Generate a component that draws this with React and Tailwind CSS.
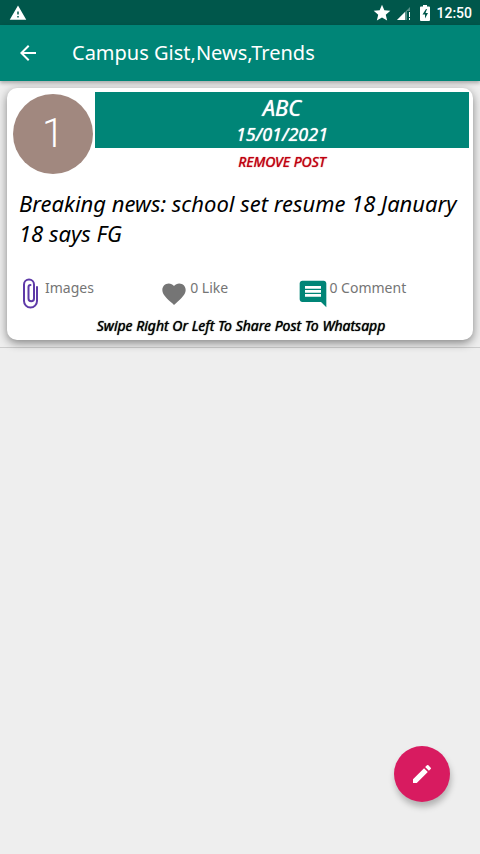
import {
  MdArrowBack,
  MdComment,
  MdEdit,
  MdFavorite,
  MdStar,
  MdWarning,
} from "react-icons/md";

const posts = [
  {
    id: 1,
    author: "ABC",
    date: "15/01/2021",
    text: "Breaking news: school set resume 18 January 18 says FG",
    likes: 0,
    comments: 0,
  },
];

function SignalIcon() {
  return (
    <svg viewBox="0 0 16 16" className="w-4 h-4" aria-hidden="true">
      <path d="M1 15 L14 2 V6 H11 V15 Z" fill="#fff" opacity="0.35" />
      <path d="M1 15 L9 7 V15 Z" fill="#fff" />
      <path d="M13 7h1v5h-1zM13 13h1v2h-1z" fill="#fff" />
    </svg>
  );
}

function BatteryIcon() {
  return (
    <svg viewBox="0 0 10 16" className="w-2.5 h-4" aria-hidden="true">
      <path
        d="M3 0h4v1.5h2a1 1 0 0 1 1 1V15a1 1 0 0 1-1 1H1a1 1 0 0 1-1-1V2.5a1 1 0 0 1 1-1h2z"
        fill="#fff"
      />
      <path d="M6 4 2.500 9.500H5V13.500L8 8H5.500L7 4z" fill="#00574b" />
    </svg>
  );
}

function ClipIcon() {
  return (
    <svg
      viewBox="0 0 16 31"
      className="w-4 h-[31px] text-[#5e3aa8]"
      fill="none"
      stroke="currentColor"
      strokeWidth="2"
      strokeLinecap="round"
      aria-hidden="true"
    >
      <path d="M14 9V23a6.500 6.500 0 0 1-13 0V6.500a5 5 0 0 1 10 0V20.500a2.500 2.500 0 0 1-5.500 0V9a2 2 0 0 1 2-2" />
    </svg>
  );
}

function StatusBar() {
  return (
    <div className="flex items-center justify-between h-[25px] pl-[9px] pr-2 bg-[#00574b] text-white">
      <MdWarning size={18} />
      <div className="flex items-center">
        <MdStar size={20} className="mr-1" />
        <SignalIcon />
        <span className="ml-2 mr-1.5">
          <BatteryIcon />
        </span>
        <span className="font-[Roboto] text-sm leading-6 font-medium">
          12:50
        </span>
      </div>
    </div>
  );
}

function PostCard({ post }) {
  return (
    <article className="rounded-[10px] bg-white pt-1 pl-1.5 pr-1 pb-1 shadow-[0_3px_10px_rgba(0,0,0,0.45)]">
      <div className="flex gap-0.5">
        <div className="mt-0.5 flex w-20 h-20 shrink-0 items-center justify-center rounded-full bg-[#a1887f] font-[Roboto] text-[40px] font-light text-white">
          {post.id}
        </div>
        <div className="flex-1 text-center italic">
          <div className="h-14 bg-[#008577] text-white [text-shadow:0_0_1px_#fff]">
            <h2 className="text-[22px] leading-[30px]">{post.author}</h2>
            <p className="text-lg leading-6">{post.date}</p>
          </div>
          <button
            type="button"
            className="block mx-auto mt-1 text-sm leading-5 italic text-[#c00010] [text-shadow:0_0_1px_#c00010]"
          >
            REMOVE POST
          </button>
        </div>
      </div>

      <p className="mt-3.5 pl-1.5 text-[22px] leading-[30px] italic text-black">
        {post.text}
      </p>

      {/* Actions */}
      <div className="mt-[30px] grid grid-cols-[4fr_4fr_5fr] h-[38px] pl-2.5 text-sm leading-5 text-[#757575]">
        <button type="button" className="flex items-start gap-1.5">
          <ClipIcon />
          <span>Images</span>
        </button>
        <button type="button" className="flex items-start gap-0.5">
          <MdFavorite size={28} className="mt-0.5" />
          <span>{post.likes} Like</span>
        </button>
        <button type="button" className="flex items-start">
          <MdComment size={32} className="text-[#008577]" />
          <span>{post.comments} Comment</span>
        </button>
      </div>

      <p className="text-center text-sm leading-5 italic text-black [text-shadow:0_0_1px_#000]">
        Swipe Right Or Left To Share Post To Whatsapp
      </p>
    </article>
  );
}

export default function App() {
  return (
    <div className="min-h-screen bg-[#eeeeee] font-['Noto_Sans',sans-serif]">
      <StatusBar />
      <header className="relative flex h-14 items-center bg-[#008577] pl-4 text-white shadow-[0_2px_4px_rgba(0,0,0,0.3)]">
        <button type="button" aria-label="Back" className="mr-8">
          <MdArrowBack size={24} />
        </button>
        <h1 className="text-xl">Campus Gist,News,Trends</h1>
      </header>

      <main>
        {posts.map((post) => (
          <div key={post.id} className="border-b border-[#cccccc] p-[7px]">
            <PostCard post={post} />
          </div>
        ))}
      </main>

      <button
        type="button"
        aria-label="New post"
        className="fixed right-[30px] bottom-[52px] flex w-14 h-14 items-center justify-center rounded-full bg-[#d81b60] text-white shadow-[1px_5px_6px_rgba(0,0,0,0.25)]"
      >
        <MdEdit size={24} />
      </button>
    </div>
  );
}
